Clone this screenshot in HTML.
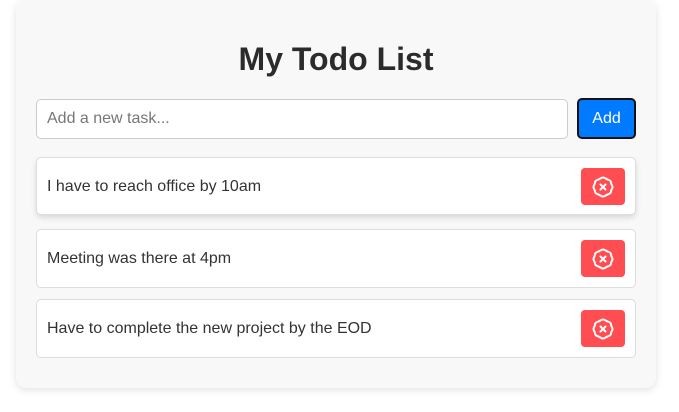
<!DOCTYPE html>
<html><head><style>
body{margin:0;background:#fff;font-family:"Liberation Sans",Arial,sans-serif;width:679px;height:412px;overflow:hidden}
.c{position:absolute;left:16px;top:0;width:640px;height:388px;background:#f8f8f8;border-radius:10px;box-shadow:0 2px 8px rgba(0,0,0,.12)}
h1{position:absolute;left:0;right:0;top:41px;margin:0;text-align:center;font-size:32px;font-weight:bold;color:#2b2b2b}
.in{position:absolute;left:20px;top:99px;width:532px;height:40px;border:1px solid #ccc;border-radius:5px;background:#fff;font-size:16px;color:#777;line-height:38px;padding-left:10px;box-sizing:border-box}
.add{position:absolute;left:561px;top:98px;width:59px;height:41px;background:#007bff;border:2px solid #111;border-radius:5px;color:#fff;font-size:16px;text-align:center;line-height:37px;box-sizing:border-box}
.it{position:absolute;left:20px;width:600px;height:57px;background:#fff;border:1px solid #ddd;border-radius:5px;font-size:16px;color:#333;line-height:57px;padding-left:10px;box-sizing:border-box}
.sh{box-shadow:0 3px 6px rgba(0,0,0,.12)}
.d{position:absolute;right:10px;top:10px;width:44px;height:37px;background:#ff4d51;border-radius:4px;display:flex;align-items:center;justify-content:center}
</style></head><body>
<div class="c">
<h1>My Todo List</h1>
<div class="in">Add a new task...</div>
<div class="add">Add</div>
<div class="it sh" style="top:157px;height:58px">I have to reach office by 10am<div class="d"><svg width="24" height="24" viewBox="0 0 24 24" fill="none" stroke="#fff" stroke-width="2" stroke-linecap="round" stroke-linejoin="round"><path d="M12 2.5C14 2.5 15 4 16.5 4.5S20 5.5 20 7.5 21.5 10 21.5 12 20 14.5 20 16.5 18 19 16.5 19.5 14 21.5 12 21.5 9 20 7.5 19.5 4 18.5 4 16.5 2.5 14 2.5 12 4 9.5 4 7.5 6 5 7.5 4.5 10 2.5 12 2.5z"/><path d="M9.5 9.5l5 5M14.5 9.5l-5 5"/></svg></div></div>
<div class="it" style="top:229px;height:59px">Meeting was there at 4pm<div class="d"><svg width="24" height="24" viewBox="0 0 24 24" fill="none" stroke="#fff" stroke-width="2" stroke-linecap="round" stroke-linejoin="round"><path d="M12 2.5C14 2.5 15 4 16.5 4.5S20 5.5 20 7.5 21.5 10 21.5 12 20 14.5 20 16.5 18 19 16.5 19.5 14 21.5 12 21.5 9 20 7.5 19.5 4 18.5 4 16.5 2.5 14 2.5 12 4 9.5 4 7.5 6 5 7.5 4.5 10 2.5 12 2.5z"/><path d="M9.5 9.5l5 5M14.5 9.5l-5 5"/></svg></div></div>
<div class="it" style="top:299px;height:59px">Have to complete the new project by the EOD<div class="d"><svg width="24" height="24" viewBox="0 0 24 24" fill="none" stroke="#fff" stroke-width="2" stroke-linecap="round" stroke-linejoin="round"><path d="M12 2.5C14 2.5 15 4 16.5 4.5S20 5.5 20 7.5 21.5 10 21.5 12 20 14.5 20 16.5 18 19 16.5 19.5 14 21.5 12 21.5 9 20 7.5 19.5 4 18.5 4 16.5 2.5 14 2.5 12 4 9.5 4 7.5 6 5 7.5 4.5 10 2.5 12 2.5z"/><path d="M9.5 9.5l5 5M14.5 9.5l-5 5"/></svg></div></div>
</div>
</body></html>
